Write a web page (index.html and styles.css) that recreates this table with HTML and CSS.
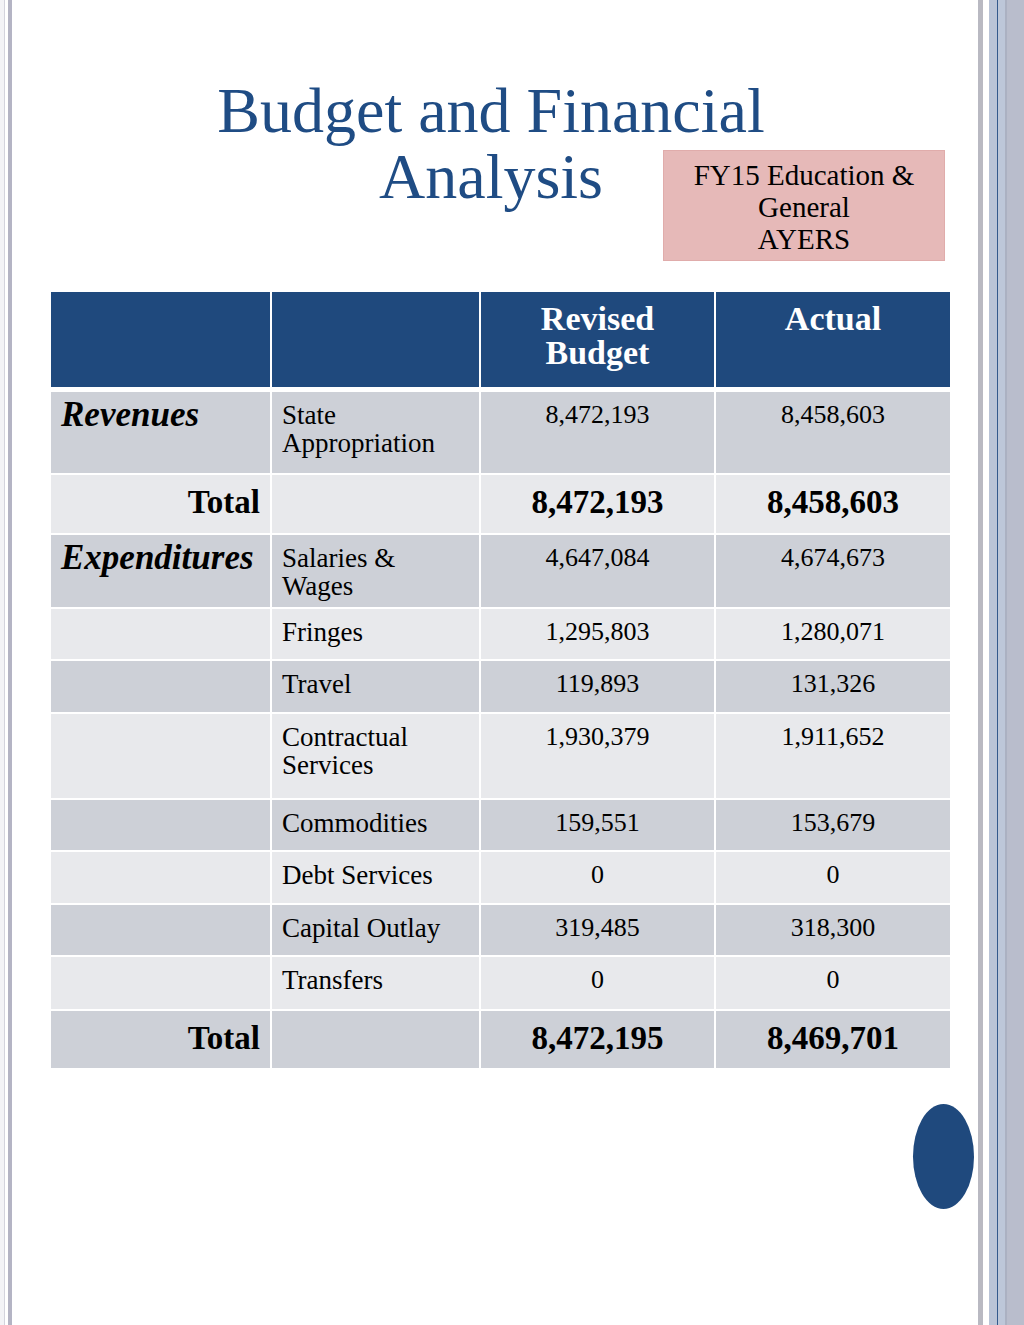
FILE: index.html
```html
<!DOCTYPE html>
<html lang="en">
<head>
<meta charset="utf-8">
<title>Budget and Financial Analysis</title>
<link rel="stylesheet" href="styles.css">
</head>
<body>
<div class="slide">
  <div class="rail-left"></div>
  <main class="content">
    <h1 class="title-line1">Budget and Financial</h1>
    <div class="title-row2">
      <span class="title-line2">Analysis</span>
      <div class="tag">FY15 Education &amp;<br>General<br>AYERS</div>
    </div>

    <table class="budget">
      <colgroup>
        <col class="c1"><col class="c2"><col class="c3"><col class="c4">
      </colgroup>
      <thead>
        <tr class="head">
          <th></th>
          <th></th>
          <th>Revised<br>Budget</th>
          <th class="last">Actual</th>
        </tr>
      </thead>
      <tbody>
        <tr class="dark h83">
          <td class="section">Revenues</td>
          <td class="item">State<br>Appropriation</td>
          <td class="num">8,472,193</td>
          <td class="num last">8,458,603</td>
        </tr>
        <tr class="light h60 total">
          <td class="total-label">Total</td>
          <td></td>
          <td class="num">8,472,193</td>
          <td class="num last">8,458,603</td>
        </tr>
        <tr class="dark h74">
          <td class="section">Expenditures</td>
          <td class="item">Salaries &amp;<br>Wages</td>
          <td class="num">4,647,084</td>
          <td class="num last">4,674,673</td>
        </tr>
        <tr class="light h52">
          <td></td>
          <td class="item">Fringes</td>
          <td class="num">1,295,803</td>
          <td class="num last">1,280,071</td>
        </tr>
        <tr class="dark h53">
          <td></td>
          <td class="item">Travel</td>
          <td class="num">119,893</td>
          <td class="num last">131,326</td>
        </tr>
        <tr class="light h86">
          <td></td>
          <td class="item">Contractual<br>Services</td>
          <td class="num">1,930,379</td>
          <td class="num last">1,911,652</td>
        </tr>
        <tr class="dark h52">
          <td></td>
          <td class="item">Commodities</td>
          <td class="num">159,551</td>
          <td class="num last">153,679</td>
        </tr>
        <tr class="light h53">
          <td></td>
          <td class="item">Debt Services</td>
          <td class="num">0</td>
          <td class="num last">0</td>
        </tr>
        <tr class="dark h52">
          <td></td>
          <td class="item">Capital Outlay</td>
          <td class="num">319,485</td>
          <td class="num last">318,300</td>
        </tr>
        <tr class="light h54">
          <td></td>
          <td class="item">Transfers</td>
          <td class="num">0</td>
          <td class="num last">0</td>
        </tr>
        <tr class="dark h57 total final">
          <td class="total-label">Total</td>
          <td></td>
          <td class="num">8,472,195</td>
          <td class="num last">8,469,701</td>
        </tr>
      </tbody>
    </table>

    <div class="footer-row">
      <div class="dot"></div>
    </div>
  </main>
  <div class="rail-right"></div>
</div>
</body>
</html>
```

FILE: styles.css
```css
html, body {
  margin: 0;
  padding: 0;
  background: #ffffff;
}

body {
  font-family: "Liberation Serif", "Times New Roman", serif;
  color: #000;
}

.slide {
  display: flex;
  width: 1024px;
  height: 1325px;
  overflow: hidden;
  background: #ffffff;
}

.rail-left {
  flex: 0 0 12px;
  background: linear-gradient(to right,
    #f3f3f6 0px, #f3f3f6 4px,
    #d3d3dc 4px, #d3d3dc 5px,
    #ffffff 5px, #ffffff 8px,
    #b4b4c4 8px, #b4b4c4 12px);
}

.rail-right {
  flex: 0 0 46px;
  background: linear-gradient(to right,
    #b9b9c2 0px, #b9b9c2 5px,
    #ffffff 5px, #ffffff 11px,
    #bac4d7 11px, #bac4d7 19px,
    #34598c 19px, #34598c 20px,
    #bdc7d9 20px, #bdc7d9 27px,
    #abb1c2 27px, #abb1c2 29px,
    #b9bdcc 29px, #b9bdcc 46px);
}

.content {
  flex: 1 1 auto;
  display: flex;
  flex-direction: column;
}

/* ---------- title ---------- */
.title-line1 {
  margin: 78px 0 0 179px;
  width: 600px;
  text-align: center;
  font-size: 64px;
  line-height: 66px;
  font-weight: normal;
  color: #1f4c84;
}

.title-row2 {
  display: flex;
  align-items: flex-start;
  padding-left: 367px;
}

.title-line2 {
  font-size: 64px;
  line-height: 66px;
  color: #1f4c84;
}

.tag {
  margin: 6px 0 0 60px;
  width: 282px;
  height: 111px;
  box-sizing: border-box;
  padding-top: 8px;
  background: #e6b9b8;
  border: 1px solid #e0acab;
  text-align: center;
  font-size: 29px;
  line-height: 32px;
  color: #000;
}

/* ---------- table ---------- */
.budget {
  margin: 31px 0 0 39px;
  width: 899px;
  border-collapse: separate;
  border-spacing: 0;
  table-layout: fixed;
}

.c1 { width: 221px; }
.c2 { width: 209px; }
.c3 { width: 235px; }
.c4 { width: 234px; }

.budget th,
.budget td {
  padding: 9px 10px 0 10px;
  vertical-align: top;
  border-right: 2px solid #ffffff;
  border-bottom: 2px solid #ffffff;
  box-sizing: border-box;
}

.budget .last {
  border-right: none;
}

.head th {
  height: 100px;
  padding-top: 10px;
  background: #1f497d;
  color: #ffffff;
  font-size: 34px;
  line-height: 34px;
  font-weight: bold;
  text-align: center;
  border-bottom: 5px solid #ffffff;
}

.dark td { background: #cdd0d7; }
.light td { background: #e8e9ec; }

.h83 td { height: 83px; }
.h60 td { height: 60px; }
.h74 td { height: 74px; }
.h52 td { height: 52px; }
.h53 td { height: 53px; }
.h54 td { height: 54px; }
.h86 td { height: 86px; }
.h57 td { height: 57px; }

.final td { border-bottom: none; }

.section {
  font-size: 35px;
  line-height: 28px;
  font-weight: bold;
  font-style: italic;
  padding-left: 11px;
}

.item {
  font-size: 27px;
  line-height: 28px;
}

.num {
  font-size: 26px;
  line-height: 28px;
  text-align: center;
}

.total td {
  padding-top: 10px;
}

.total .num,
.total-label {
  font-size: 33px;
  line-height: 34px;
  font-weight: bold;
}

.total-label {
  text-align: right;
}

/* ---------- footer ---------- */
.footer-row {
  display: flex;
  justify-content: flex-end;
  padding: 36px 4px 0 0;
}

.dot {
  width: 61px;
  height: 105px;
  border-radius: 50%;
  background: #1f497d;
}
```
